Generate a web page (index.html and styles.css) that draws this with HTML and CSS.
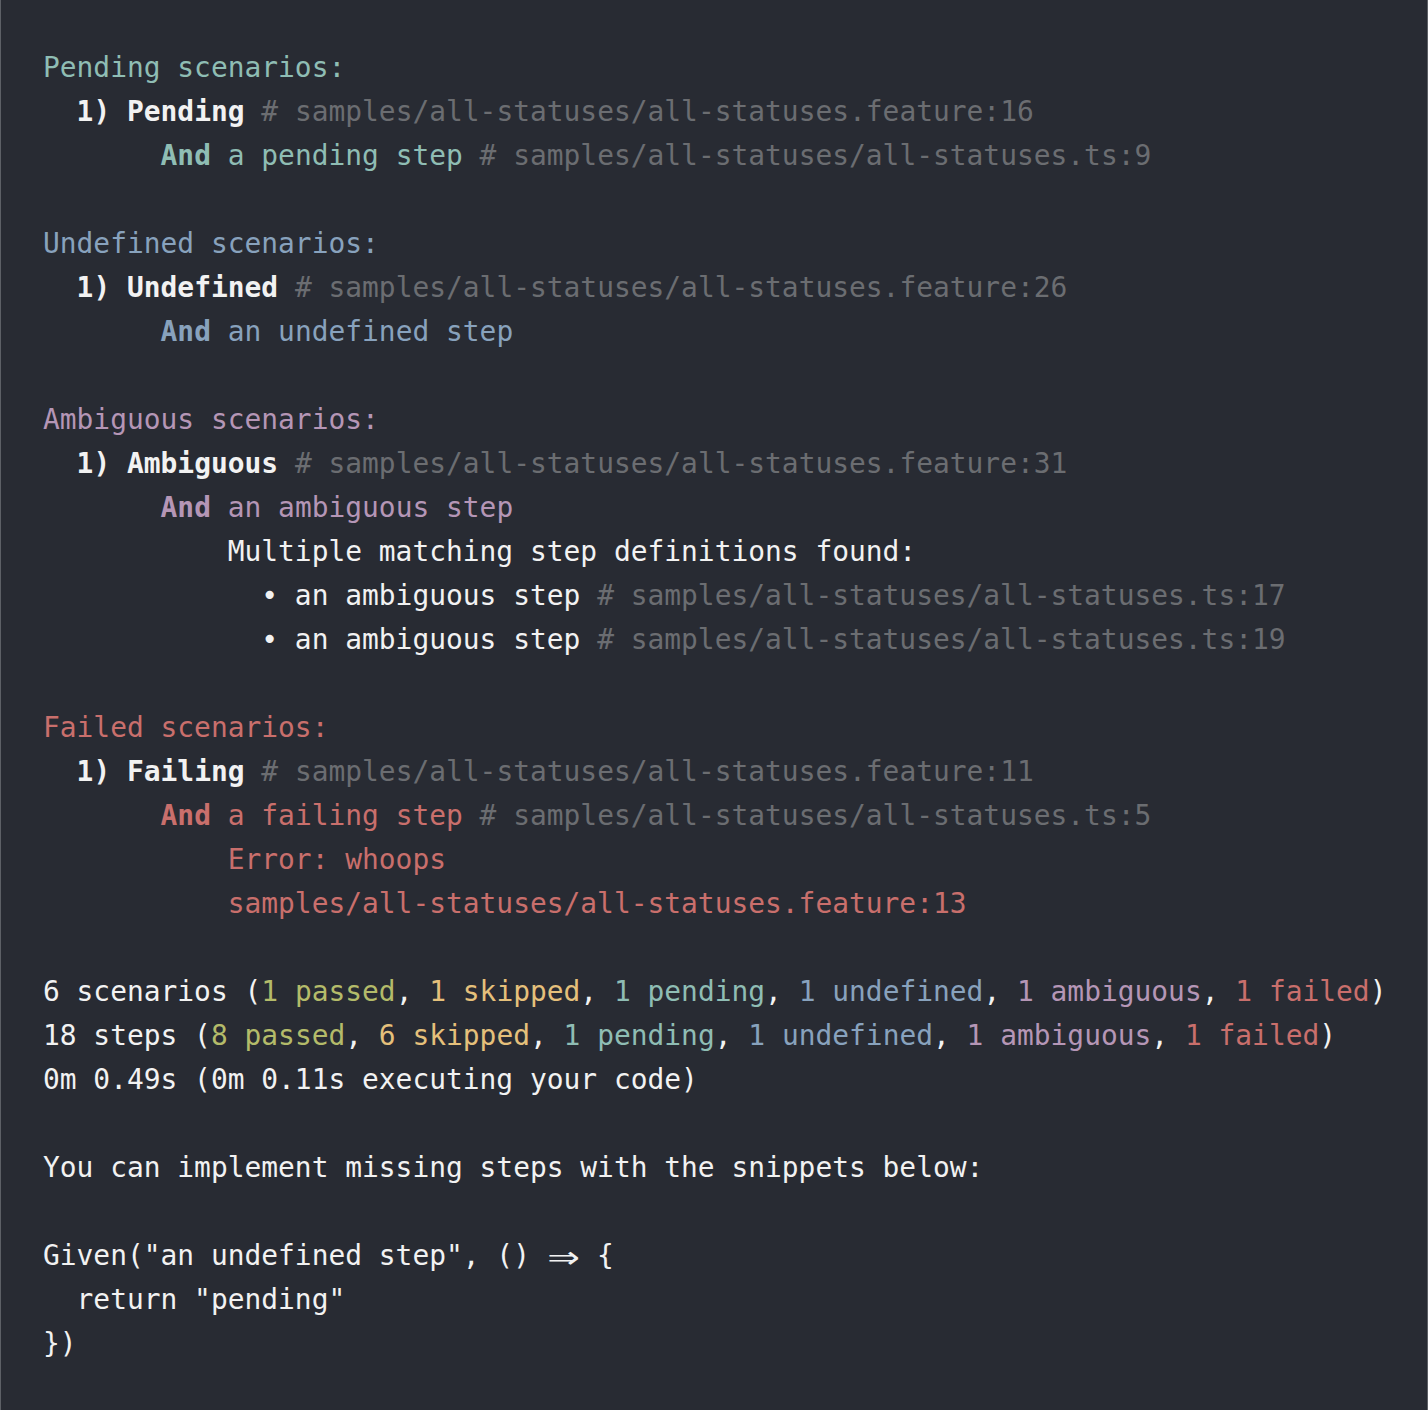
FILE: index.html
```html
<!DOCTYPE html>
<html lang="en">
<head>
<meta charset="utf-8">
<title>Cucumber summary</title>
<link rel="stylesheet" href="styles.css">
</head>
<body>
<main class="term">
  <section class="block">
    <div class="line pend">Pending scenarios:</div>
    <div class="line">  <b class="hi">1) Pending</b> <span class="dim"># samples/all-statuses/all-statuses.feature:16</span></div>
    <div class="line pend">       <b>And</b> a pending step <span class="dim"># samples/all-statuses/all-statuses.ts:9</span></div>
  </section>
  <section class="block">
    <div class="line undef">Undefined scenarios:</div>
    <div class="line">  <b class="hi">1) Undefined</b> <span class="dim"># samples/all-statuses/all-statuses.feature:26</span></div>
    <div class="line undef">       <b>And</b> an undefined step</div>
  </section>
  <section class="block">
    <div class="line amb">Ambiguous scenarios:</div>
    <div class="line">  <b class="hi">1) Ambiguous</b> <span class="dim"># samples/all-statuses/all-statuses.feature:31</span></div>
    <div class="line amb">       <b>And</b> an ambiguous step</div>
    <div class="line hi">           Multiple matching step definitions found:</div>
    <div class="line hi">             • an ambiguous step <span class="dim"># samples/all-statuses/all-statuses.ts:17</span></div>
    <div class="line hi">             • an ambiguous step <span class="dim"># samples/all-statuses/all-statuses.ts:19</span></div>
  </section>
  <section class="block">
    <div class="line fail">Failed scenarios:</div>
    <div class="line">  <b class="hi">1) Failing</b> <span class="dim"># samples/all-statuses/all-statuses.feature:11</span></div>
    <div class="line fail">       <b>And</b> a failing step <span class="dim"># samples/all-statuses/all-statuses.ts:5</span></div>
    <div class="line fail">           Error: whoops</div>
    <div class="line fail">           samples/all-statuses/all-statuses.feature:13</div>
  </section>
  <section class="block">
    <div class="line hi">6 scenarios (<span class="pass">1 passed</span>, <span class="skip">1 skipped</span>, <span class="pend">1 pending</span>, <span class="undef">1 undefined</span>, <span class="amb">1 ambiguous</span>, <span class="fail">1 failed</span>)</div>
    <div class="line hi">18 steps (<span class="pass">8 passed</span>, <span class="skip">6 skipped</span>, <span class="pend">1 pending</span>, <span class="undef">1 undefined</span>, <span class="amb">1 ambiguous</span>, <span class="fail">1 failed</span>)</div>
    <div class="line hi">0m 0.49s (0m 0.11s executing your code)</div>
  </section>
  <section class="block">
    <div class="line hi">You can implement missing steps with the snippets below:</div>
  </section>
  <section class="block">
    <div class="line hi">Given("an undefined step", () <span class="arrow">⇒</span> {</div>
    <div class="line hi">  return "pending"</div>
    <div class="line hi">})</div>
  </section>
</main>
</body>
</html>
```

FILE: styles.css
```css
html, body {
  margin: 0;
  padding: 0;
  background: #282b33;
}

.term {
  box-sizing: border-box;
  width: 1428px;
  min-height: 1410px;
  padding: 46px 42px 40px;
  border-left: 1px solid #5d6066;
  border-right: 1px solid #5d6066;
  background: #282b33;
  color: #f2f2f2;
  font-family: "DejaVu Sans Mono", "Liberation Mono", monospace;
  font-size: 27.9px;
  display: flex;
  flex-direction: column;
  gap: 44px;
}

.block {
  display: flex;
  flex-direction: column;
}

.line {
  white-space: pre;
  line-height: 44px;
  height: 44px;
}

b {
  font-weight: bold;
}

.hi { color: #f2f2f2; }
.dim { color: #6b6d71; font-weight: normal; }
.pend { color: #8fbdb4; }
.undef { color: #88a2bd; }
.amb { color: #b596b6; }
.fail { color: #c96f6c; }
.pass { color: #b4bb6a; }
.skip { color: #e5c07b; }

.arrow {
  display: inline-block;
  width: 2ch;
  text-align: center;
  transform: scale(1.9, 1.4);
}
```
